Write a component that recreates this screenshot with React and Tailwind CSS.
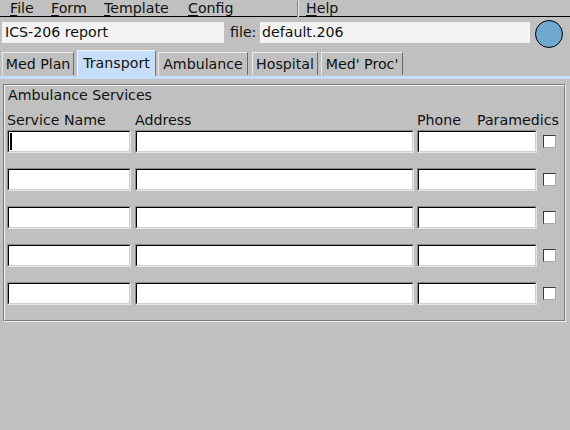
import React from 'react'

const tabs = [
  { label: 'Med Plan', cls: 'w-[72px]' },
  { label: 'Transport', cls: 'w-[79px] ml-[3px]', active: true },
  { label: 'Ambulance', cls: 'w-[90px] ml-[2px]' },
  { label: 'Hospital', cls: 'w-[66px] ml-[4px]' },
  { label: "Med' Proc'", cls: 'w-[82px] ml-[3px]' },
]
const rows = [0, 1, 2, 3, 4]

function Mnemonic({ label }) {
  return (
    <>
      <span className="underline underline-offset-[2px]">{label[0]}</span>
      {label.slice(1)}
    </>
  )
}

function Entry({ w, cursor }) {
  return (
    <div className={`${w} h-[23px] border border-t-[#8a8a8a] border-l-[#8a8a8a] border-b-[#e6e6e6] border-r-[#e6e6e6]`}>
      <div className="h-full border border-t-black border-l-black border-b-[#d0d0d0] border-r-[#d0d0d0] bg-white flex items-center pl-[1px]">
        {cursor && <span className="w-[2px] h-[17px] bg-black" />}
      </div>
    </div>
  )
}

function Check() {
  return (
    <div className="w-[13px] h-[13px] bg-white border border-t-[#3a3a3a] border-l-[#3a3a3a] border-b-[#a8a8a8] border-r-[#a8a8a8]" />
  )
}

export default function App() {
  return (
    <div className="w-[570px] h-[430px] overflow-hidden bg-[#c0c0c0] text-[14.2px] leading-[17px] text-[#111] font-['DejaVu_Sans',sans-serif] flex flex-col">
      {/* menu bar */}
      <div className="h-[17px] shrink-0 flex items-center border-b border-black pt-[1px]">
        <div className="w-[297px] flex pl-[2px]">
          <span className="w-[40px] pl-[8px]"><Mnemonic label="File" /></span>
          <span className="w-[53px] pl-[9px]"><Mnemonic label="Form" /></span>
          <span className="w-[84px] pl-[9px]"><Mnemonic label="Template" /></span>
          <span className="pl-[9px]"><Mnemonic label="Config" /></span>
        </div>
        <div className="w-[2px] h-[16px] border-l border-l-[#808080] border-r border-r-[#e8e8e8]" />
        <span className="pl-[7px]"><Mnemonic label="Help" /></span>
      </div>

      {/* title row */}
      <div className="h-[33px] shrink-0 flex items-start px-[2px]">
        <div className="mt-[5px] w-[222px] h-[21px] bg-[#f3f3f3] pl-[3px] flex items-center">ICS-206 report</div>
        <span className="mt-[5px] h-[21px] flex items-center ml-[6px] w-[30px]">file:</span>
        <div className="mt-[5px] w-[270px] h-[21px] bg-[#f3f3f3] pl-[2px] flex items-center">default.206</div>
        <div className="mt-[3px] ml-[5px] w-[28px] h-[28px] rounded-full bg-[#6fa8d0] border border-black" />
      </div>

      {/* tabs */}
      <div className="h-[26px] shrink-0 flex items-end px-[2px]">
        {tabs.map(t =>
          t.active ? (
            <div key={t.label} className={`${t.cls} h-[26px] flex items-center justify-center bg-[#c6defa] border-t border-l border-r border-t-[#f4f4f4] border-l-[#f4f4f4] border-r-[#7a7a7a]`}>
              {t.label}
            </div>
          ) : (
            <div key={t.label} className={`${t.cls} h-[23px] mb-[1px] flex items-center justify-center border-t border-l border-r border-t-[#ececec] border-l-[#ececec] border-r-[#6a6a6a]`}>
              {t.label}
            </div>
          )
        )}
      </div>
      <div className="h-[3px] shrink-0 bg-[#c6defa]" />

      {/* page */}
      <div className="pt-[5px] px-[3px]">
        <div className="w-[563px] h-[238px] border border-t-[#7a7a7a] border-l-[#7a7a7a] border-b-[#f0f0f0] border-r-[#f0f0f0]">
          <div className="h-full border border-t-[#f0f0f0] border-l-[#f0f0f0] border-b-[#7a7a7a] border-r-[#7a7a7a] pl-[2px]">
            <div className="pl-[1px] pt-[1px]">Ambulance Services</div>
            <div className="mt-[8px] flex">
              <span className="w-[128px]">Service Name</span>
              <span className="w-[282px]">Address</span>
              <span className="w-[60px]">Phone</span>
              <span>Paramedics</span>
            </div>
            <div className="mt-[1px] flex flex-col gap-[15px]">
              {rows.map(r => (
                <div key={r} className="flex items-center">
                  <Entry w="w-[124px]" cursor={r === 0} />
                  <div className="w-[4px]" />
                  <Entry w="w-[279px]" />
                  <div className="w-[3px]" />
                  <Entry w="w-[120px]" />
                  <div className="w-[6px]" />
                  <Check />
                </div>
              ))}
            </div>
          </div>
        </div>
      </div>
    </div>
  )
}
